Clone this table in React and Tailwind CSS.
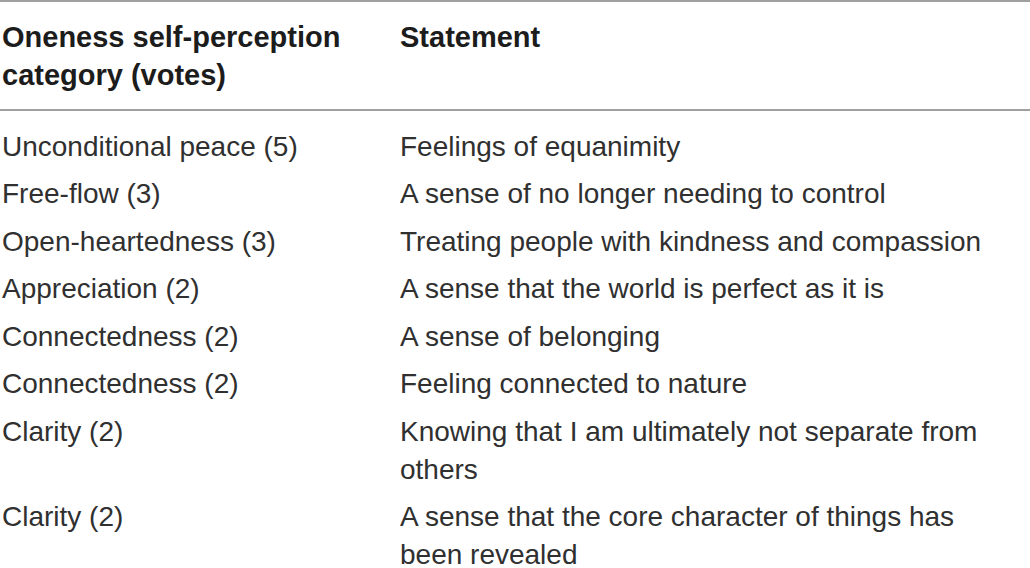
const ROWS = [
  ['Unconditional peace (5)', 'Feelings of equanimity'],
  ['Free-flow (3)', 'A sense of no longer needing to control'],
  ['Open-heartedness (3)', 'Treating people with kindness and compassion'],
  ['Appreciation (2)', 'A sense that the world is perfect as it is'],
  ['Connectedness (2)', 'A sense of belonging'],
  ['Connectedness (2)', 'Feeling connected to nature'],
  ['Clarity (2)', 'Knowing that I am ultimately not separate from others'],
  ['Clarity (2)', 'A sense that the core character of things has been revealed'],
];

export default function App() {
  return (
    <div
      className="w-[1030px] h-[568px] overflow-hidden bg-white text-[28px] leading-[38px] text-[#303030]"
      style={{ fontFamily: '"Liberation Sans", Arial, sans-serif' }}
    >
      <div className="border-t-2 border-[#a0a0a0]">
        {/* Header */}
        <div className="grid grid-cols-[400px_1fr] pt-[16px] pb-[15px] border-b-2 border-[#a0a0a0] font-bold text-[29px] text-[#1c1c1c]">
          <div className="pl-[2px] pr-4">
            Oneness self-perception
            <br />
            category (votes)
          </div>
          <div>Statement</div>
        </div>

        {/* Body */}
        <div className="pt-[12px]">
          {ROWS.map(([cat, statement], i) => (
            <div key={i} className="grid grid-cols-[400px_1fr] py-[4.75px]">
              <div className="pl-[2px] pr-4">{cat}</div>
              <div className="pr-[40px]">{statement}</div>
            </div>
          ))}
        </div>
      </div>
    </div>
  );
}
